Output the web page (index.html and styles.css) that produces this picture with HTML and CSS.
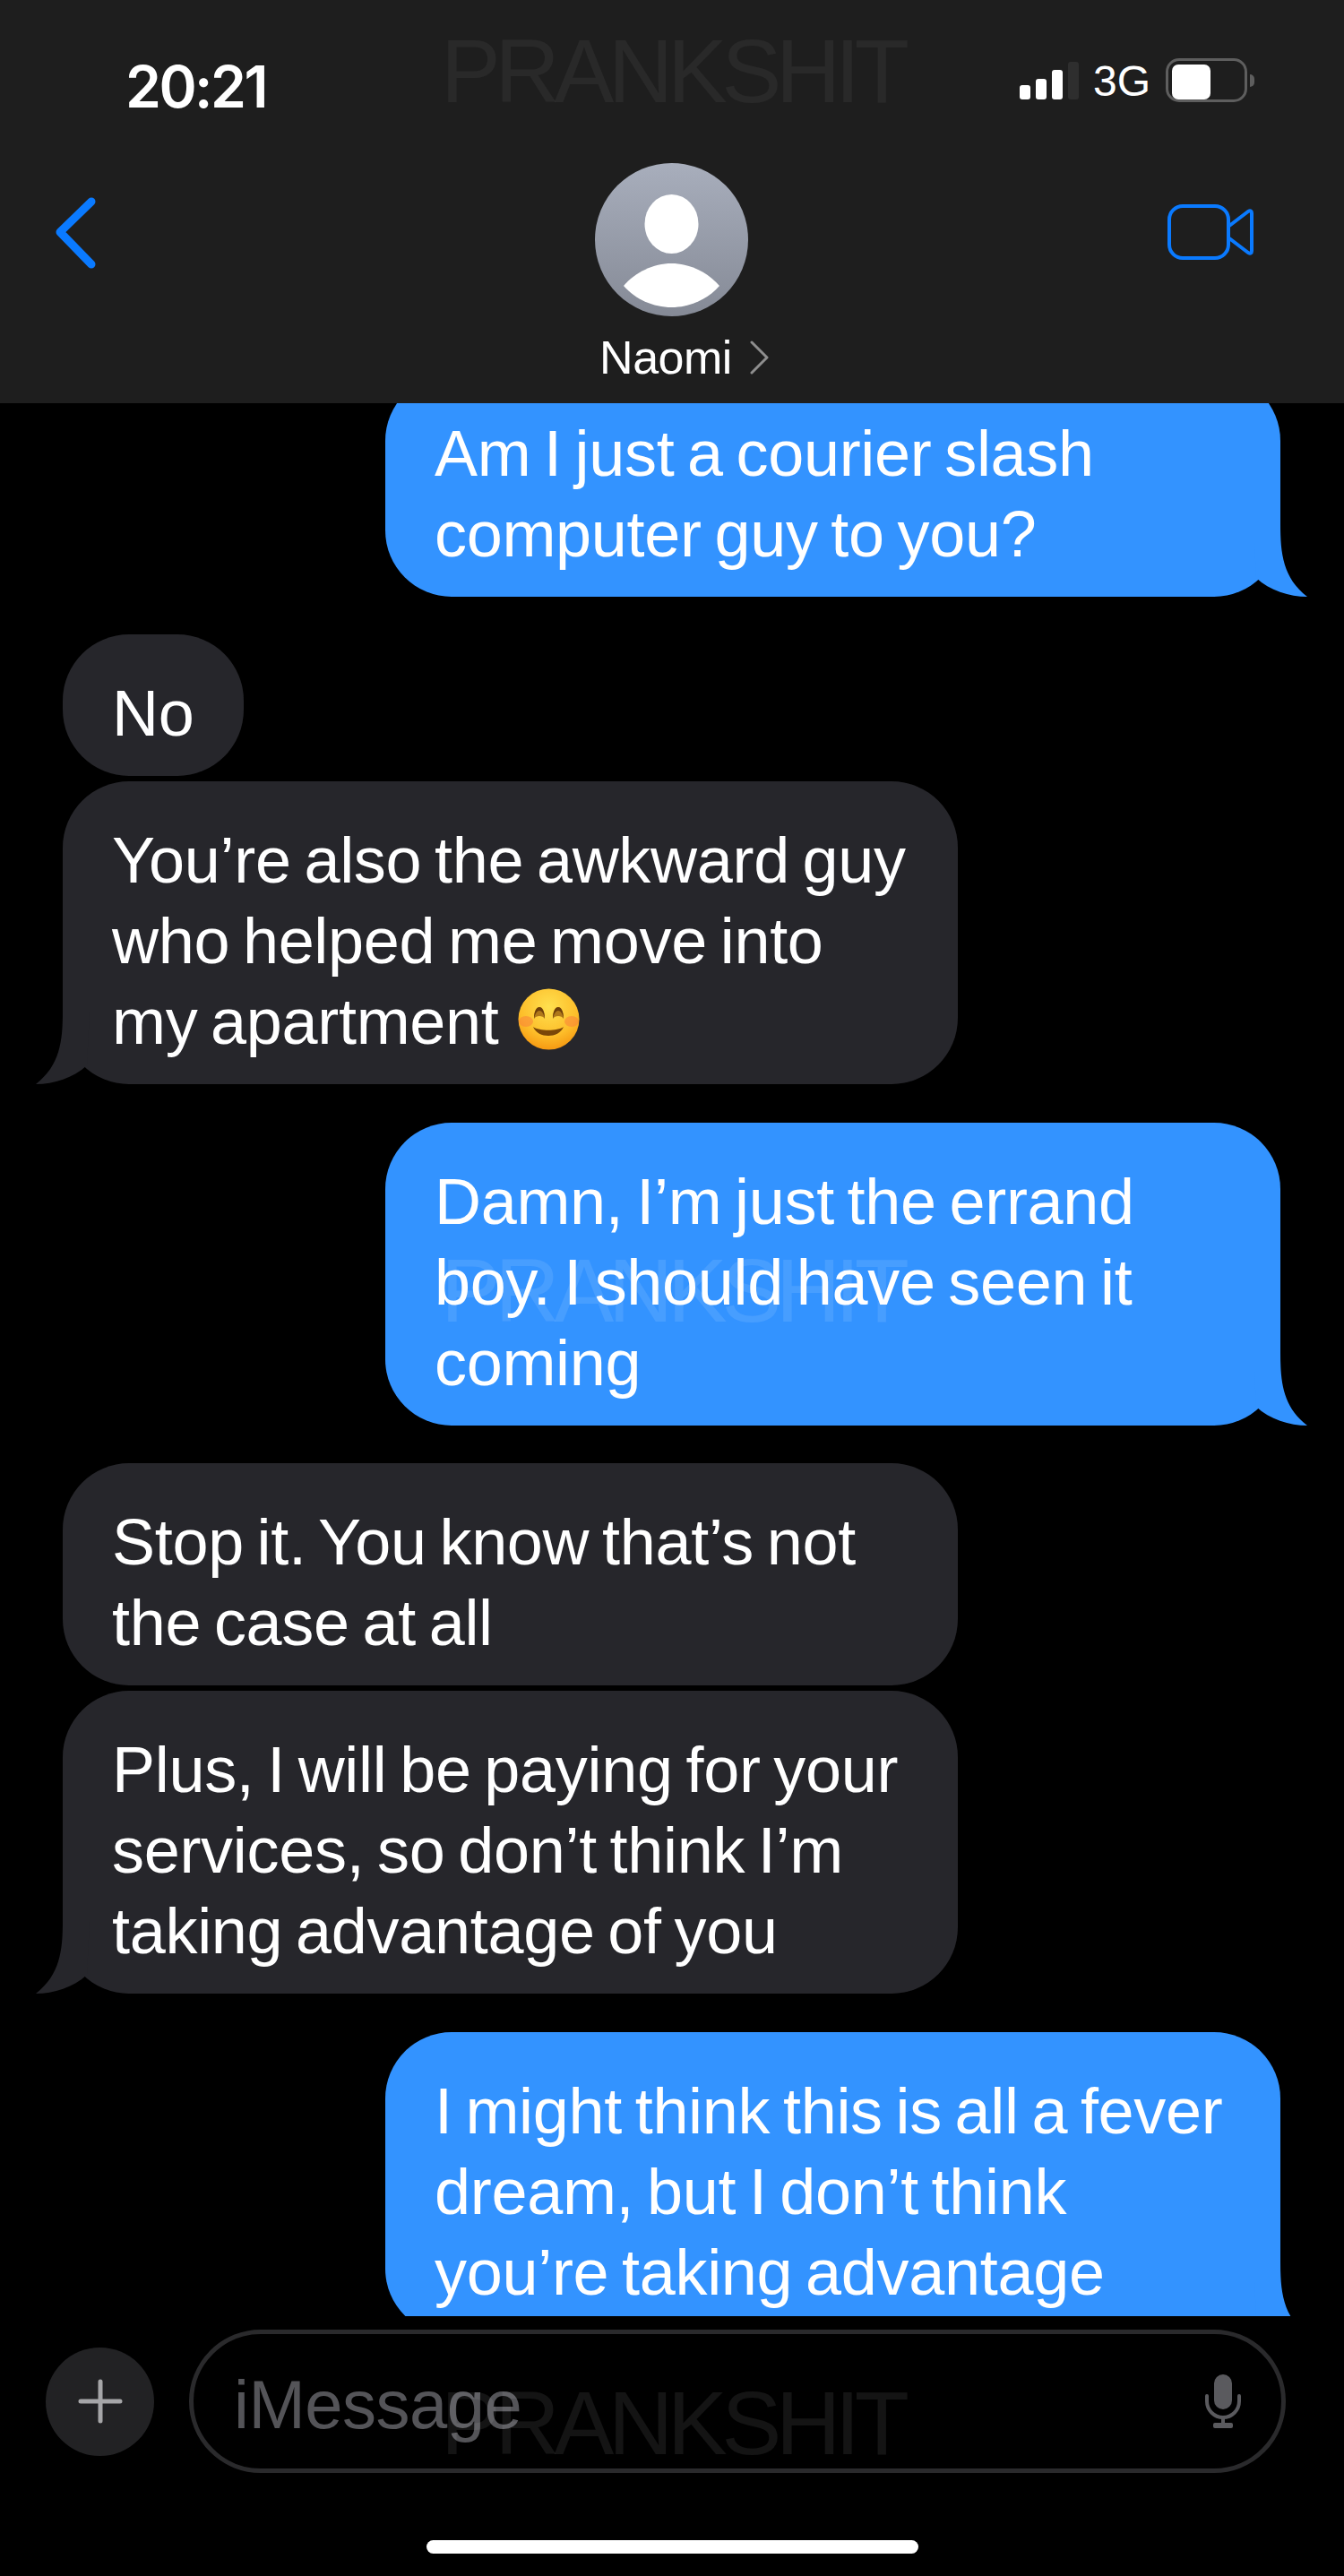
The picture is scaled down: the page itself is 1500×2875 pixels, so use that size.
FILE: index.html
```html
<!DOCTYPE html>
<html lang="en">
<head>
  <meta charset="utf-8">
  <title>Naomi</title>
  <link rel="stylesheet" href="styles.css">
</head>
<body>
<div class="screen">

  <div class="header">
    <div class="statusbar">
      <span class="clock">20:21</span>
      <div class="status-icons">
        <div class="signal">
          <span class="bar bar1"></span>
          <span class="bar bar2"></span>
          <span class="bar bar3"></span>
          <span class="bar bar4"></span>
        </div>
        <span class="network">3G</span>
        <div class="battery"><span class="battery-level"></span></div>
        <span class="battery-nub"></span>
      </div>
    </div>

    <div class="nav">
      <svg class="back" width="50" height="80" viewBox="0 0 50 80">
        <path d="M42 5 L7 39 L42 75" fill="none" stroke="#0a7aff" stroke-width="9" stroke-linecap="round" stroke-linejoin="round"/>
      </svg>

      <div class="contact">
        <svg class="avatar" width="171" height="171" viewBox="0 0 171 171">
          <defs>
            <linearGradient id="avatarfill" x1="0" y1="0" x2="0" y2="1">
              <stop offset="0" stop-color="#a8aebc"/>
              <stop offset="1" stop-color="#858a96"/>
            </linearGradient>
          </defs>
          <circle cx="85.5" cy="85.5" r="85.5" fill="url(#avatarfill)"/>
          <ellipse cx="85.5" cy="68" rx="30" ry="33" fill="#fff"/>
          <path d="M32 137 C45 122 65 112 85.5 112 C106 112 126 122 139 137 C126 152 106 161 85.5 161 C65 161 45 152 32 137 Z" fill="#fff"/>
        </svg>
        <div class="contact-name">
          <span>Naomi</span>
          <svg width="22" height="38" viewBox="0 0 22 38">
            <path d="M2 2 L19 19 L2 36" fill="none" stroke="#8e8e8e" stroke-width="3" stroke-linecap="round" stroke-linejoin="round"/>
          </svg>
        </div>
      </div>

      <svg class="facetime" width="97" height="64" viewBox="0 0 97 64">
        <rect x="2" y="2" width="66" height="58" rx="15" fill="none" stroke="#0a7aff" stroke-width="4"/>
        <path d="M69 24 L90 8 Q94 6 94 10 L94 52 Q94 56 90 54 L69 38" fill="none" stroke="#0a7aff" stroke-width="4" stroke-linejoin="round"/>
      </svg>
    </div>
  </div>

  <div class="thread">
    <div class="msg out">
      Am I just a courier slash<br>computer guy to you?
      <svg class="tail" viewBox="0 0 60 84"><path d="M30 2 C30 35 33 62 60 83 C40 83 18 76 3 62 L0 2 Z"/></svg>
    </div>

    <div class="msg in short">No</div>

    <div class="msg in follow">
      You’re also the awkward guy<br>who helped me move into<br>my apartment
      <svg class="emoji" width="69" height="69" viewBox="0 0 69 69">
        <defs>
          <radialGradient id="emojifill" cx="0.5" cy="0.3" r="0.72">
            <stop offset="0" stop-color="#ffe04f"/>
            <stop offset="0.65" stop-color="#fdbe2a"/>
            <stop offset="1" stop-color="#f59610"/>
          </radialGradient>
        </defs>
        <circle cx="34.5" cy="34.5" r="34" fill="url(#emojifill)"/>
        <ellipse cx="9" cy="37" rx="8" ry="6" fill="#f9813a" opacity="0.55"/>
        <ellipse cx="60" cy="37" rx="8" ry="6" fill="#f9813a" opacity="0.55"/>
        <path d="M18 34 C18 25 21 21 24 21 C27 21 30 25 30 34 C28 30 20 30 18 34 Z M39 34 C39 25 42 21 45 21 C48 21 51 25 51 34 C49 30 41 30 39 34 Z" fill="#b0781a"/>
        <path d="M18 34 C18 25 21 21 24 21 C27 21 30 25 30 34 C29 29 27 25 24 25 C21 25 19 29 18 34 Z M39 34 C39 25 42 21 45 21 C48 21 51 25 51 34 C50 29 48 25 45 25 C42 25 40 29 39 34 Z" fill="#6e3e0a"/>
        <path d="M17 43 C24 48 44 48 51 43 C48 50 41 53 34 53 C27 53 20 50 17 43 Z" fill="#7a4608"/>
      </svg>
      <svg class="tail" viewBox="0 0 60 84"><path d="M30 2 C30 35 33 62 60 83 C40 83 18 76 3 62 L0 2 Z"/></svg>
    </div>

    <div class="msg out">
      Damn, I’m just the errand<br>boy. I should have seen it<br>coming
      <svg class="tail" viewBox="0 0 60 84"><path d="M30 2 C30 35 33 62 60 83 C40 83 18 76 3 62 L0 2 Z"/></svg>
    </div>

    <div class="msg in">Stop it. You know that’s not<br>the case at all</div>

    <div class="msg in follow">
      Plus, I will be paying for your<br>services, so don’t think I’m<br>taking advantage of you
      <svg class="tail" viewBox="0 0 60 84"><path d="M30 2 C30 35 33 62 60 83 C40 83 18 76 3 62 L0 2 Z"/></svg>
    </div>

    <div class="msg out">
      I might think this is all a fever<br>dream, but I don’t think<br>you’re taking advantage
      <svg class="tail" viewBox="0 0 60 84"><path d="M30 2 C30 35 33 62 60 83 C40 83 18 76 3 62 L0 2 Z"/></svg>
    </div>
  </div>

  <div class="footer">
    <div class="composer">
      <div class="apps">
        <svg width="50" height="50" viewBox="0 0 50 50">
          <path d="M25 3 V47 M3 25 H47" fill="none" stroke="#a6a6a8" stroke-width="5" stroke-linecap="round"/>
        </svg>
      </div>
      <div class="input">
        <span class="placeholder">iMessage</span>
        <svg width="42" height="60" viewBox="0 0 42 60">
          <rect x="11" y="0" width="20" height="39" rx="10" fill="#5a5a5e"/>
          <path d="M3 24 V30 A18 18 0 0 0 39 30 V24" fill="none" stroke="#5a5a5e" stroke-width="4" stroke-linecap="round"/>
          <path d="M21 48 V56" stroke="#5a5a5e" stroke-width="4"/>
          <rect x="10" y="54" width="22" height="6" rx="2" fill="#5a5a5e"/>
        </svg>
      </div>
    </div>
    <div class="homebar"></div>
  </div>

  <span class="watermark mark-top">PRANKSHIT</span>
  <span class="watermark mark-middle">PRANKSHIT</span>
  <span class="watermark mark-bottom">PRANKSHIT</span>

</div>
</body>
</html>
```

FILE: styles.css
```css
body {
  margin: 0;
  background-color: #000000;
  font-family: "Liberation Sans", Arial, sans-serif;
  color: #ffffff;
}

.screen {
  position: relative;
  display: flex;
  flex-direction: column;
  width: 1500px;
  height: 2875px;
  overflow: hidden;
  background-color: #000000;
}

/* header */
.header {
  height: 450px;
  flex: none;
  background-color: #1e1e1e;
}
.statusbar {
  display: flex;
  justify-content: space-between;
  height: 182px;
  padding-left: 140px;
  padding-right: 100px;
}
.clock {
  margin-top: 62px;
  font-family: Inter, sans-serif;
  font-size: 64px;
  line-height: 70px;
  font-weight: 600;
  letter-spacing: -2.5px;
}
.status-icons {
  display: flex;
  align-items: flex-end;
  height: 114px;
}
.signal {
  display: flex;
  align-items: flex-end;
  gap: 6px;
  height: 42px;
  margin-bottom: 3px;
}
.bar {
  width: 12px;
  border-radius: 3px;
  background-color: #ffffff;
}
.bar1 { height: 16px; }
.bar2 { height: 23px; }
.bar3 { height: 33px; }
.bar4 { height: 42px; background-color: #2e2e2e; }
.network {
  margin-left: 16px;
  margin-bottom: -2px;
  font-size: 48px;
  line-height: 50px;
}
.battery {
  width: 91px;
  height: 49px;
  margin-left: 17px;
  box-sizing: border-box;
  padding: 4px;
  border: 3px solid #5e5e5e;
  border-radius: 15px;
}
.battery-level {
  display: block;
  width: 43px;
  height: 39px;
  border-radius: 7px;
  background-color: #ffffff;
}
.battery-nub {
  width: 5px;
  height: 14px;
  margin-left: 3px;
  margin-bottom: 17px;
  border-radius: 0 6px 6px 0;
  background-color: #5e5e5e;
}
.nav {
  display: flex;
  justify-content: space-between;
  align-items: flex-start;
  padding-left: 60px;
  padding-right: 100px;
}
.back {
  margin-top: 38px;
}
.contact {
  display: flex;
  flex-direction: column;
  align-items: center;
  margin-left: 87px;
}
.contact-name {
  display: flex;
  align-items: center;
  gap: 20px;
  margin-top: 21px;
  margin-left: 28px;
  font-size: 52px;
  line-height: 50px;
  letter-spacing: -0.5px;
}
.facetime {
  margin-top: 46px;
}

/* messages */
.thread {
  display: flex;
  flex-direction: column;
  height: 2135px;
  flex: none;
  overflow: hidden;
  padding: 0 71px 0 70px;
  box-sizing: border-box;
}
.msg {
  position: relative;
  flex: none;
  box-sizing: border-box;
  width: 999px;
  margin-top: 42px;
  padding: 43px 40px 25px 55px;
  border-radius: 74px;
  font-size: 72px;
  line-height: 90px;
  letter-spacing: -0.3px;
  word-spacing: -5px;
}
.msg.follow {
  margin-top: 6px;
}
.msg.short {
  width: 202px;
}
.in {
  align-self: flex-start;
  background-color: #26262b;
}
.out {
  align-self: flex-end;
  margin-top: 43px;
  background-color: #3393ff;
}
.thread > .msg:first-child {
  margin-top: -32px;
}
.tail {
  position: absolute;
  bottom: -1px;
  width: 60px;
  height: 84px;
}
.out .tail {
  right: -30px;
  fill: #3393ff;
}
.in .tail {
  left: -30px;
  fill: #26262b;
  transform: scaleX(-1);
}
.emoji {
  vertical-align: -7px;
  margin-left: 7px;
}

/* input */
.footer {
  flex: 1;
  display: flex;
  flex-direction: column;
}
.composer {
  display: flex;
  align-items: center;
  gap: 39px;
  margin-top: 15px;
  padding-left: 51px;
}
.apps {
  display: flex;
  align-items: center;
  justify-content: center;
  width: 121px;
  height: 121px;
  border-radius: 50%;
  background-color: #222224;
}
.input {
  display: flex;
  align-items: center;
  justify-content: space-between;
  box-sizing: border-box;
  width: 1224px;
  height: 160px;
  padding-left: 45px;
  padding-right: 44px;
  border: 5px solid #2a2a2c;
  border-radius: 80px;
  font-size: 76px;
  letter-spacing: -0.5px;
  color: #545458;
}
.placeholder {
  margin-top: 6px;
}
.homebar {
  width: 549px;
  height: 15px;
  margin: 75px auto 0;
  border-radius: 8px;
  background-color: #ffffff;
}

/* watermark over the shot */
.watermark {
  position: absolute;
  left: 492px;
  font-size: 100px;
  line-height: 100px;
  letter-spacing: -6.2px;
  pointer-events: none;
}
.mark-top {
  top: 29px;
  color: rgba(255, 255, 255, 0.05);
}
.mark-middle {
  top: 1390px;
  color: rgba(255, 255, 255, 0.1);
}
.mark-bottom {
  top: 2654px;
  color: rgba(255, 255, 255, 0.08);
}
```
